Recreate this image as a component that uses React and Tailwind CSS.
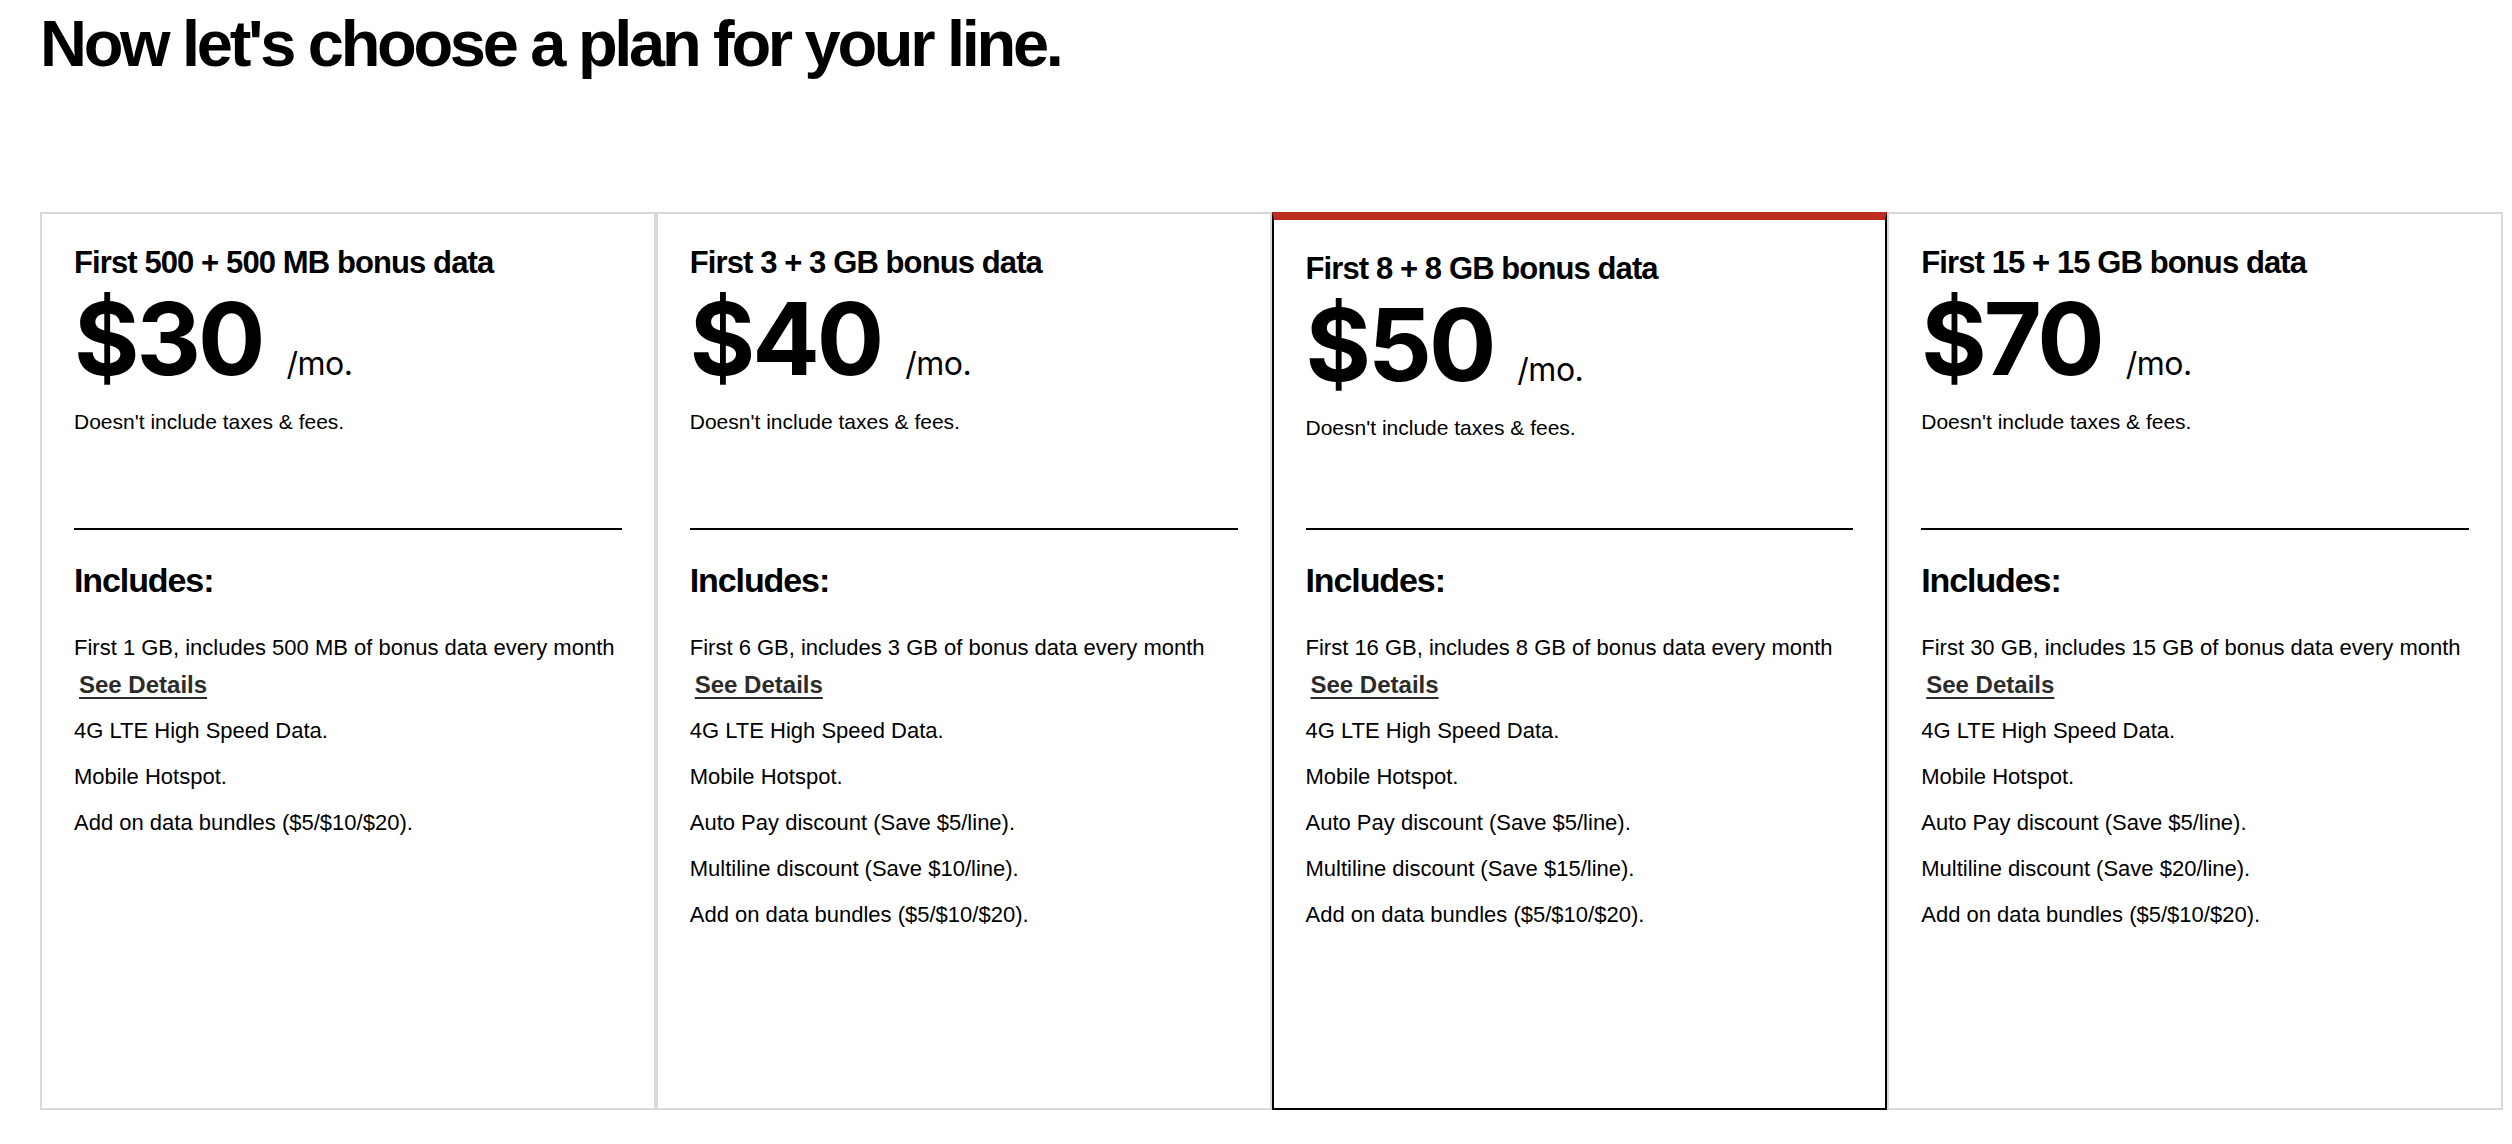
import React from "react";

const plans = [
  {
    title: "First 500 + 500 MB bonus data",
    price: "$30",
    first: "First 1 GB, includes 500 MB of bonus data every month",
    items: ["4G LTE High Speed Data.", "Mobile Hotspot.", "Add on data bundles ($5/$10/$20)."],
  },
  {
    title: "First 3 + 3 GB bonus data",
    price: "$40",
    first: "First 6 GB, includes 3 GB of bonus data every month",
    items: [
      "4G LTE High Speed Data.",
      "Mobile Hotspot.",
      "Auto Pay discount (Save $5/line).",
      "Multiline discount (Save $10/line).",
      "Add on data bundles ($5/$10/$20).",
    ],
  },
  {
    title: "First 8 + 8 GB bonus data",
    price: "$50",
    selected: true,
    first: "First 16 GB, includes 8 GB of bonus data every month",
    items: [
      "4G LTE High Speed Data.",
      "Mobile Hotspot.",
      "Auto Pay discount (Save $5/line).",
      "Multiline discount (Save $15/line).",
      "Add on data bundles ($5/$10/$20).",
    ],
  },
  {
    title: "First 15 + 15 GB bonus data",
    price: "$70",
    first: "First 30 GB, includes 15 GB of bonus data every month",
    items: [
      "4G LTE High Speed Data.",
      "Mobile Hotspot.",
      "Auto Pay discount (Save $5/line).",
      "Multiline discount (Save $20/line).",
      "Add on data bundles ($5/$10/$20).",
    ],
  },
];

function Card({ plan }) {
  return (
    <div
      className={
        plan.selected
          ? "flex flex-col border-2 border-t-8 border-black border-t-[#bd2b22] px-[32px]"
          : "flex flex-col border-2 border-[#d8d8d8] px-[32px]"
      }
    >
      <div className={plan.selected ? "flex h-[308px] flex-col pt-[33px]" : "flex h-[314px] flex-col pt-[33px]"}>
        <div className="text-[31px] font-bold leading-none tracking-[-0.9px] text-black">{plan.title}</div>
        <div className="mt-[11px] flex items-baseline">
          <span className="font-[Inter] text-[100px] font-bold leading-none tracking-[-3px] text-black">{plan.price}</span>
          <span className="ml-[24px] font-[Inter] text-[32px] leading-none tracking-[-0.5px] text-black">/mo.</span>
        </div>
        <div className="mt-[22px] text-[21px] leading-none text-black">Doesn't include taxes &amp; fees.</div>
      </div>
      <div className="h-[2px] w-full bg-black" />
      <div className="mt-[33px] text-[34px] font-bold leading-none tracking-[-1.1px] text-black">Includes:</div>
      <ul className="mt-[37px] flex flex-col gap-[18px] text-[22px] leading-[28px] text-black">
        <li className="flex flex-col">
          <span>{plan.first}</span>
          <a
            href="#"
            className="mt-[9px] pl-[5px] text-[24px] font-bold leading-[28px] text-[#2b2b2b] underline decoration-[1.5px] underline-offset-[4px]"
          >
            See Details
          </a>
        </li>
        {plan.items.map((it) => (
          <li key={it}>{it}</li>
        ))}
      </ul>
    </div>
  );
}

export default function App() {
  return (
    <div
      className="min-h-[1144px] w-[2512px] bg-white"
      style={{ fontFamily: '"Liberation Sans", Arial, Helvetica, sans-serif' }}
    >
      <h1 className="ml-[40px] pt-[11px] text-[65px] font-bold leading-none tracking-[-3.3px] text-black">
        Now let's choose a plan for your line.
      </h1>
      <div className="ml-[40px] mt-[136px] grid h-[898px] w-[2463px] grid-cols-4">
        {plans.map((p) => (
          <Card key={p.price} plan={p} />
        ))}
      </div>
    </div>
  );
}
